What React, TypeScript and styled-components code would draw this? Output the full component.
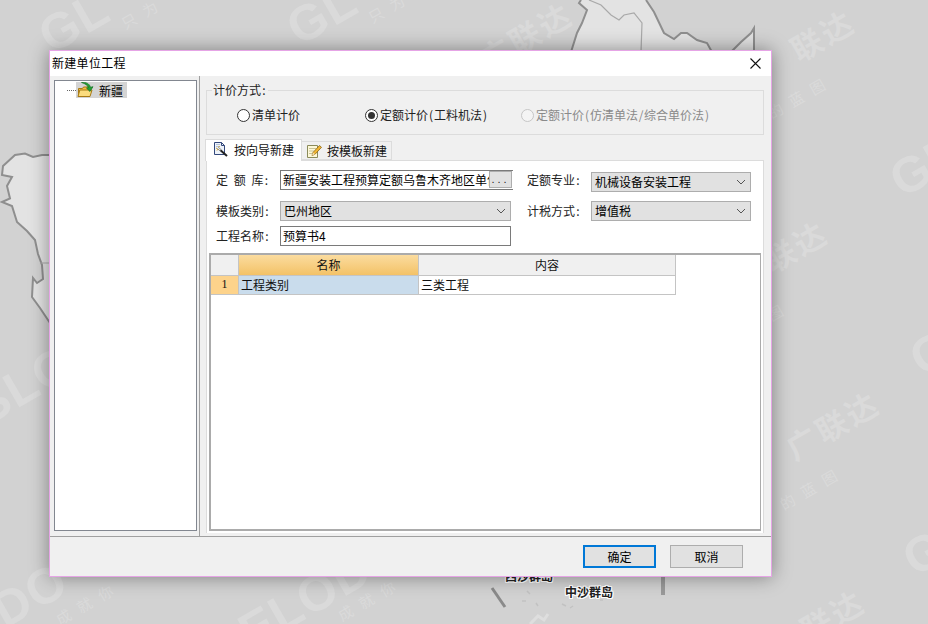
import React from "react";
import styled, { createGlobalStyle } from "styled-components";

const FONT = `"Noto Sans CJK SC", "Liberation Sans", sans-serif`;

const Global = createGlobalStyle`
  html, body { margin: 0; padding: 0; width: 928px; height: 624px; overflow: hidden; }
  body { font-family: ${FONT}; font-size: 12px; color: #111; }
`;

const Desktop = styled.div`
  position: relative;
  width: 928px;
  height: 624px;
  overflow: hidden;
  background: #d2d2d2;
`;

const MapLayer = styled.svg`
  position: absolute;
  left: 0;
  top: 0;
`;

const Watermark = styled.span<{ $x: number; $y: number; $size: number; $latin?: boolean }>`
  position: absolute;
  left: ${(p) => p.$x}px;
  top: ${(p) => p.$y}px;
  transform: translate(-50%, -50%) rotate(-30deg);
  font-family: ${(p) => (p.$latin ? `"Liberation Sans", sans-serif` : FONT)};
  font-size: ${(p) => p.$size}px;
  font-weight: ${(p) => (p.$latin ? 700 : p.$size < 20 ? 400 : 600)};
  letter-spacing: ${(p) => (p.$latin ? "1px" : p.$size < 20 ? "9px" : "3px")};
  line-height: 1;
  white-space: nowrap;
  color: #dadada;
`;

const PlaceName = styled.span<{ $x: number; $y: number }>`
  position: absolute;
  left: ${(p) => p.$x}px;
  top: ${(p) => p.$y}px;
  font-size: 12px;
  line-height: 14px;
  font-weight: 700;
  color: #222;
  text-shadow: 1px 0 0 #fff, -1px 0 0 #fff, 0 1px 0 #fff, 0 -1px 0 #fff, 1px 1px 0 #fff, -1px -1px 0 #fff, 1px -1px 0 #fff, -1px 1px 0 #fff;
`;

const Dialog = styled.div`
  position: absolute;
  left: 49px;
  top: 50px;
  width: 723px;
  height: 527px;
  box-sizing: border-box;
  display: flex;
  flex-direction: column;
  background: #f0f0f0;
  border: 1px solid #e6a4e6;
  box-shadow: 0 0 18px rgba(0, 0, 0, 0.4);
`;

const TitleBar = styled.div`
  height: 25px;
  flex: none;
  display: flex;
  align-items: center;
  justify-content: space-between;
  padding: 0 10px 3px 2px;
  box-sizing: border-box;
  background: #fff;
  font-size: 12px;
  letter-spacing: 0.3px;
  color: #000;
`;

const CloseIcon = styled.svg`
  display: block;
  margin-top: 3px;
`;

const Main = styled.div`
  height: 460px;
  flex: none;
  display: flex;
`;

const LeftPane = styled.div`
  width: 150px;
  flex: none;
  box-sizing: border-box;
  padding: 4px 0 0 4px;
  border-right: 1px solid #a0a0a0;
`;

const TreeBox = styled.div`
  width: 143px;
  height: 451px;
  box-sizing: border-box;
  background: #fff;
  border: 1px solid #828790;
  padding: 1px 0 0 12px;
`;

const TreeRow = styled.div`
  display: flex;
  align-items: center;
  height: 16px;
`;

const TreeDots = styled.span`
  width: 9px;
  height: 0;
  border-top: 1px dotted #666;
`;

const TreeNode = styled.span`
  display: flex;
  align-items: center;
  gap: 5px;
  width: 51px;
  height: 16px;
  box-sizing: border-box;
  padding-left: 1px;
  background: #d4d4d4;
  color: #000;
`;

const RightPane = styled.div`
  flex: 1;
  min-width: 0;
  box-sizing: border-box;
  padding: 7px 7px 3px 6px;
  display: flex;
  flex-direction: column;
`;

const GroupBox = styled.fieldset`
  margin: 0;
  padding: 0;
  height: 52px;
  flex: none;
  box-sizing: border-box;
  border: 1px solid #dcdcdc;
`;

const GroupLegend = styled.legend`
  margin-left: 5px;
  padding: 0 1px;
  line-height: 14px;
  font-size: 12px;
  color: #222;
`;

const RadioRow = styled.div`
  display: flex;
  padding: 8px 0 0 30px;
`;

const RadioItem = styled.label<{ $w?: number; $off?: boolean }>`
  display: flex;
  align-items: center;
  gap: 2px;
  height: 18px;
  width: ${(p) => (p.$w ? `${p.$w}px` : "auto")};
  color: ${(p) => (p.$off ? "#8a8a8a" : "#222")};
  white-space: nowrap;
`;

const RadioDot = styled.span<{ $on?: boolean; $off?: boolean }>`
  width: 13px;
  height: 13px;
  flex: none;
  margin-top: 2px;
  box-sizing: border-box;
  border-radius: 50%;
  background: ${(p) => (p.$off ? "#f4f4f4" : "#fff")};
  border: 1px solid ${(p) => (p.$off ? "#c6c6c6" : "#333")};
  display: flex;
  align-items: center;
  justify-content: center;
  &::after {
    content: "";
    display: ${(p) => (p.$on ? "block" : "none")};
    width: 7px;
    height: 7px;
    border-radius: 50%;
    background: #333;
  }
`;

const Narrow = styled.span`
  display: inline-block;
  width: 6px;
  text-align: center;
`;

const TabBar = styled.div`
  margin-top: 4px;
  height: 21px;
  flex: none;
  display: flex;
  align-items: flex-end;
  position: relative;
  z-index: 1;
`;

const Tab = styled.div<{ $active?: boolean }>`
  height: ${(p) => (p.$active ? "22px" : "19px")};
  margin-bottom: ${(p) => (p.$active ? "-1px" : "0")};
  margin-left: ${(p) => (p.$active ? "-1px" : "0")};
  box-sizing: border-box;
  display: flex;
  align-items: center;
  gap: 5px;
  white-space: nowrap;
  padding: ${(p) => (p.$active ? "0 0 3px 7px" : "0 0 0 4px")};
  width: ${(p) => (p.$active ? "97px" : "90px")};
  background: ${(p) => (p.$active ? "#fff" : "#f0f0f0")};
  border: 1px solid #dcdcdc;
  border-left-width: ${(p) => (p.$active ? "1px" : "0")};
  border-bottom-width: ${(p) => (p.$active ? "0" : "1px")};
  color: #111;
`;

const TabPage = styled.div`
  flex: 1;
  min-height: 0;
  box-sizing: border-box;
  background: #fff;
  border: 1px solid #dcdcdc;
  border-bottom: 0;
  padding: 9px 1px 2px 2px;
  display: flex;
  flex-direction: column;
`;

const FormGrid = styled.div`
  display: grid;
  grid-template-columns: 64px 233px 14px 64px 160px;
  grid-template-rows: 31px 25px 20px;
  margin-left: 7px;
  flex: none;
`;

const FieldLabel = styled.div<{ $col: number; $spaced?: boolean }>`
  grid-column: ${(p) => p.$col};
  line-height: 19px;
  height: 20px;
  color: #222;
  white-space: nowrap;
  word-spacing: ${(p) => (p.$spaced ? "3px" : "0")};
`;

const LibraryField = styled.div`
  grid-column: 2;
  width: 233px;
  height: 20px;
  box-sizing: border-box;
  display: flex;
  background: #fff;
  border: 1px solid #7a7a7a;
  border-right: 0;
`;

const LibraryText = styled.div`
  flex: 1;
  min-width: 0;
  overflow: hidden;
  white-space: nowrap;
  padding-left: 2px;
  line-height: 17px;
  color: #000;
`;

const EllipsisButton = styled.div`
  width: 23px;
  height: 17px;
  flex: none;
  box-sizing: border-box;
  margin-right: 1px;
  background: #e1e1e1;
  border: 1px solid #adadad;
  text-align: center;
  font-family: "Liberation Sans", sans-serif;
  font-size: 11px;
  line-height: 15px;
  letter-spacing: 3px;
  color: #222;
`;

const SelectBox = styled.div<{ $col: number; $w: number; $top?: number }>`
  grid-column: ${(p) => p.$col};
  width: ${(p) => p.$w}px;
  height: 20px;
  margin-top: ${(p) => p.$top ?? 0}px;
  box-sizing: border-box;
  display: flex;
  align-items: center;
  justify-content: space-between;
  padding: 0 4px 1px 3px;
  background: #e1e1e1;
  border: 1px solid #adadad;
  color: #000;
`;

const TextBox = styled.div`
  grid-column: 2;
  width: 231px;
  height: 20px;
  box-sizing: border-box;
  padding-left: 2px;
  line-height: 17px;
  background: #fff;
  border: 1px solid #7a7a7a;
  color: #000;
`;

const DataGrid = styled.div`
  margin: 7px 1px 0 0;
  flex: 1;
  min-height: 0;
  box-sizing: border-box;
  background: #fff;
  border: 2px solid #ababab;
  border-right-width: 1px;
`;

const GridRow = styled.div<{ $h: number }>`
  display: flex;
  height: ${(p) => p.$h}px;
`;

const Cell = styled.div<{ $w: number; $kind: "corner" | "head" | "plainhead" | "num" | "sel" | "plain"; $center?: boolean }>`
  width: ${(p) => p.$w}px;
  flex: none;
  box-sizing: border-box;
  padding-left: ${(p) => (p.$center ? 0 : 2)}px;
  padding-bottom: 1px;
  display: flex;
  align-items: center;
  justify-content: ${(p) => (p.$center ? "center" : "flex-start")};
  color: #111;
  border-right: 1px solid #c4c4c4;
  border-bottom: 1px solid #c4c4c4;
  background: ${(p) =>
    ({
      corner: "#f0f0f0",
      head: "linear-gradient(#fbdc9f, #f3c267)",
      plainhead: "#f0f0f0",
      num: "#fdd38b",
      sel: "#c9dcec",
      plain: "#fff",
    })[p.$kind]};
`;

const RowNumber = styled.span`
  font-family: "Liberation Serif", serif;
  font-size: 12px;
`;

const Footer = styled.div`
  flex: 1;
  box-sizing: border-box;
  border-top: 1px solid #a0a0a0;
  display: flex;
  justify-content: flex-end;
  align-items: flex-start;
  gap: 14px;
  padding: 8px 28px 0 0;
`;

const DialogButton = styled.div<{ $primary?: boolean }>`
  width: 73px;
  height: 23px;
  box-sizing: border-box;
  display: flex;
  align-items: center;
  justify-content: center;
  background: #e1e1e1;
  border: ${(p) => (p.$primary ? "2px solid #0078d7" : "1px solid #adadad")};
  color: #000;
`;

const Chevron = () => (
  <svg width="10" height="6" viewBox="0 0 10 6" fill="none">
    <path d="M1 1l4 4 4-4" stroke="#555" strokeWidth="1" />
  </svg>
);

const FolderIcon = () => (
  <svg width="17" height="16" viewBox="0 0 17 16">
    <path d="M1.500 6.500h4l1-1.500h5v9.500h-10z" fill="#f2bd45" stroke="#a87a14" strokeWidth="1" />
    <path d="M1 14.500l1.800-6.500h12.200l-2 6.500z" fill="#fbdc7e" stroke="#a87a14" strokeWidth="1" />
    <path d="M4.500.500c4.500-.5 8 1 9 4.800l2.500-.6-3 4.800-3.500-3.400 2-.5C10.500 3.300 8.500 1.800 4.500.500z" fill="#22a032" stroke="#137024" strokeWidth=".7" />
  </svg>
);

const WizardIcon = () => (
  <svg width="16" height="16" viewBox="0 0 16 16" fill="none">
    <path d="M1.500 1.500h7l3 3v9h-10z" fill="#eef3fa" stroke="#34497c" />
    <path d="M8.500 1.500v3h3" stroke="#34497c" />
    <path d="M3 3.500h4M3 5.500h4" stroke="#b5c3d8" />
    <path d="M5 7l9 8" stroke="#222" strokeWidth="2" />
    <path d="M5 7l2.500 2.300" stroke="#eee" strokeWidth="1.500" />
    <path d="M3 7.500l1-.5M4 9.500l1-1.500M6 5l.2 1" stroke="#d9a521" />
  </svg>
);

const NoteIcon = () => (
  <svg width="16" height="16" viewBox="0 0 16 16" fill="none">
    <path d="M1.500 2.500h10v12h-10z" fill="#fdf8d8" stroke="#8a8a5a" />
    <path d="M3 5.500h7M3 8h5M3 10.500h4" stroke="#c8c49a" />
    <path d="M6 12.500l1-3 6.500-7 2 1.800-6.500 7z" fill="#f2b632" stroke="#8a6414" strokeWidth=".8" />
    <path d="M6 12.500l1-3 2 1.800z" fill="#f6e2b8" />
  </svg>
);

const WATERMARKS = [
  { t: "GL", x: 74, y: 22, s: 50, l: true },
  { t: "只为", x: 143, y: 12, s: 15 },
  { t: "GL", x: 322, y: 14, s: 50, l: true },
  { t: "只为", x: 390, y: 6, s: 15 },
  { t: "广联达", x: 525, y: 35, s: 31 },
  { t: "联达", x: 822, y: 34, s: 31 },
  { t: "的蓝图", x: 800, y: 96, s: 15 },
  { t: "GL", x: 925, y: 166, s: 50, l: true },
  { t: "联达", x: 795, y: 245, s: 31 },
  { t: "图", x: 779, y: 310, s: 15 },
  { t: "GL", x: 945, y: 345, s: 50, l: true },
  { t: "广联达", x: 832, y: 424, s: 31 },
  { t: "的蓝图", x: 812, y: 487, s: 15 },
  { t: "GL", x: 938, y: 545, s: 50, l: true },
  { t: "联达", x: 832, y: 614, s: 31 },
  { t: "SLO", x: 24, y: 385, s: 50, l: true },
  { t: "DO", x: 30, y: 595, s: 50, l: true },
  { t: "成就你", x: 88, y: 602, s: 15 },
  { t: "ELOD", x: 305, y: 600, s: 50, l: true },
  { t: "成就你", x: 370, y: 598, s: 15 },
];

const MapBackground = () => (
  <MapLayer width="928" height="624" viewBox="0 0 928 624" fill="none">
    <path d="M579 3L587 10L582 23L577 33L571 52H712L707 43L697 40L687 33L681 33L674 39L664 33L654 12L646 0H581z" fill="#e3e3e3" />
    <path d="M731 52L741 42L751 33L754 28V52z" fill="#e3e3e3" />
    <path d="M581 0L579 3L587 10L582 23L577 33L571 52M646 0L654 12L664 33L674 39L681 33L687 33L697 40L707 43L712 52M731 52L741 42L751 33L754 28V52" stroke="#8f8f8f" strokeWidth="2" />
    <path d="M589 0L601 5L611 15L619 20L624 15L634 13L642 23L641 52" stroke="#a9a9a9" strokeWidth="1.200" />
    <path d="M52 155L42 155L33 157L25 153.500L15 155L3 166L2 175L12 177L7 186L10 198.500L2 202L12 206L17 222L27 231L35 240L38 254L42 265L43 279L37 283L33 278L32 297L40 308L52 326z" fill="#e3e3e3" stroke="#8f8f8f" strokeWidth="2" />
    <path d="M40 263H52" stroke="#a9a9a9" strokeWidth="1" />
    <path d="M492 588L505 607" stroke="#8a8a8a" strokeWidth="3" />
    <path d="M663 575V595" stroke="#9a9a9a" strokeWidth="4" />
    <path d="M527 591l3 3M522 601h4M536 603l2 3M562 604l4 2M570 608l3-2M600 600h3" stroke="#c2c2c2" strokeWidth="1.500" />
    <path d="M530 624l8-8 6 4 4-6" stroke="#dedede" strokeWidth="3" />
  </MapLayer>
);

export default function App() {
  return (
    <Desktop>
      <Global />
      <MapBackground />
      {WATERMARKS.map((w, i) => (
        <Watermark key={i} $x={w.x} $y={w.y} $size={w.s} $latin={w.l}>
          {w.t}
        </Watermark>
      ))}
      <PlaceName $x={505} $y={569}>西沙群岛</PlaceName>
      <PlaceName $x={565} $y={585}>中沙群岛</PlaceName>

      <Dialog>
        <TitleBar>
          <span>新建单位工程</span>
          <CloseIcon width="11" height="11" viewBox="0 0 11 11" fill="none">
            <path d="M.5.5l10 10M10.500.5l-10 10" stroke="#111" strokeWidth="1.100" />
          </CloseIcon>
        </TitleBar>
        <Main>
          <LeftPane>
            <TreeBox>
              <TreeRow>
                <TreeDots />
                <TreeNode>
                  <FolderIcon />
                  新疆
                </TreeNode>
              </TreeRow>
            </TreeBox>
          </LeftPane>
          <RightPane>
            <GroupBox>
              <GroupLegend>计价方式<Narrow>:</Narrow></GroupLegend>
              <RadioRow>
                <RadioItem $w={128}>
                  <RadioDot />
                  清单计价
                </RadioItem>
                <RadioItem $w={156}>
                  <RadioDot $on />
                  <span>定额计价<Narrow>(</Narrow>工料机法<Narrow>)</Narrow></span>
                </RadioItem>
                <RadioItem $off>
                  <RadioDot $off />
                  <span>定额计价<Narrow>(</Narrow>仿清单法<Narrow>/</Narrow>综合单价法<Narrow>)</Narrow></span>
                </RadioItem>
              </RadioRow>
            </GroupBox>
            <TabBar>
              <Tab $active>
                <WizardIcon />
                按向导新建
              </Tab>
              <Tab>
                <NoteIcon />
                按模板新建
              </Tab>
            </TabBar>
            <TabPage>
              <FormGrid>
                <FieldLabel $col={1} $spaced>定 额 库<Narrow>:</Narrow></FieldLabel>
                <LibraryField>
                  <LibraryText>新疆安装工程预算定额乌鲁木齐地区单位估价表</LibraryText>
                  <EllipsisButton>...</EllipsisButton>
                </LibraryField>
                <FieldLabel $col={4}>定额专业<Narrow>:</Narrow></FieldLabel>
                <SelectBox $col={5} $w={160} $top={2}>
                  机械设备安装工程
                  <Chevron />
                </SelectBox>

                <FieldLabel $col={1}>模板类别<Narrow>:</Narrow></FieldLabel>
                <SelectBox $col={2} $w={231}>
                  巴州地区
                  <Chevron />
                </SelectBox>
                <FieldLabel $col={4}>计税方式<Narrow>:</Narrow></FieldLabel>
                <SelectBox $col={5} $w={160}>
                  增值税
                  <Chevron />
                </SelectBox>

                <FieldLabel $col={1}>工程名称<Narrow>:</Narrow></FieldLabel>
                <TextBox>预算书4</TextBox>
              </FormGrid>
              <DataGrid>
                <GridRow $h={21}>
                  <Cell $w={28} $kind="corner" />
                  <Cell $w={180} $kind="head" $center>名称</Cell>
                  <Cell $w={257} $kind="plainhead" $center>内容</Cell>
                </GridRow>
                <GridRow $h={19}>
                  <Cell $w={28} $kind="num" $center><RowNumber>1</RowNumber></Cell>
                  <Cell $w={180} $kind="sel">工程类别</Cell>
                  <Cell $w={257} $kind="plain">三类工程</Cell>
                </GridRow>
              </DataGrid>
            </TabPage>
          </RightPane>
        </Main>
        <Footer>
          <DialogButton $primary>确定</DialogButton>
          <DialogButton>取消</DialogButton>
        </Footer>
      </Dialog>
    </Desktop>
  );
}
